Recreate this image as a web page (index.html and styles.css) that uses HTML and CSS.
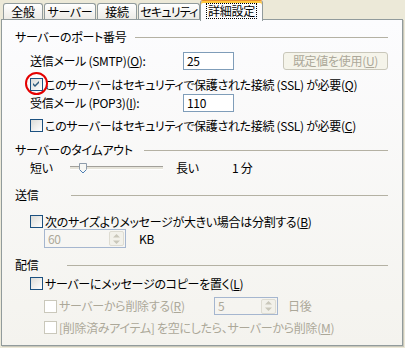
FILE: index.html
```html
<!DOCTYPE html>
<html lang="ja">
<head>
    <meta charset="UTF-8">
    <title>詳細設定</title>
    <link rel="stylesheet" href="styles.css">
</head>
<body>

    <!-- Tab strip -->
    <div class="tabs">
        <div class="tab tab-general">全般</div>
        <div class="tab tab-server">サーバー</div>
        <div class="tab tab-connect">接続</div>
        <div class="tab tab-security">セキュリティ</div>
        <div class="tab tab-active"><span class="focus">詳細設定</span></div>
    </div>

    <!-- Tab page -->
    <div class="panel">

        <div class="group-title row-ports">
            <span>サーバーのポート番号</span>
            <i class="rule rule-ports"></i>
        </div>

        <div class="field-row row-smtp">
            <span class="field-label">送信メール (SMTP)(<u>O</u>):</span>
            <div class="text-box">25</div>
            <div class="btn disabled">既定値を使用(<u>U</u>)</div>
        </div>

        <div class="check-row row-ssl1">
            <span class="check">
                <svg width="11" height="11" viewBox="0 0 11 11"><path d="M2 4 L4 6 L8 2 L8 4 L4 8 L2 6 Z" fill="#2c5a7c"/></svg>
            </span>
            <span class="check-text">このサーバーはセキュリティで保護された接続 (SSL) が必要(<u>Q</u>)</span>
            <span class="mark"></span>
        </div>

        <div class="field-row row-pop3">
            <span class="field-label">受信メール (POP3)(<u>I</u>):</span>
            <div class="text-box">110</div>
        </div>

        <div class="check-row row-ssl2">
            <span class="check"></span>
            <span class="check-text">このサーバーはセキュリティで保護された接続 (SSL) が必要(<u>C</u>)</span>
        </div>

        <div class="group-title row-timeout">
            <span>サーバーのタイムアウト</span>
            <i class="rule rule-timeout"></i>
        </div>

        <div class="slider-row">
            <span class="slider-short">短い</span>
            <div class="slider">
                <div class="track"></div>
                <svg class="thumb" width="9" height="11" viewBox="0 0 9 11">
                    <path d="M0.5 0.5 H7.5 V6.5 L4 10 L0.5 6.5 Z" fill="#f7f7f4" stroke="#8d9bab"/>
                    <path d="M1 7 L4 10 L7 7" fill="none" stroke="#4f7fb4"/>
                </svg>
            </div>
            <span class="slider-long">長い</span>
            <span>1 分</span>
        </div>

        <div class="group-title row-send">
            <span>送信</span>
            <i class="rule rule-send"></i>
        </div>

        <div class="check-row row-split">
            <span class="check"></span>
            <span class="check-text">次のサイズよりメッセージが大きい場合は分割する(<u>B</u>)</span>
        </div>

        <div class="spin-row row-size">
            <div class="spin spin-size">
                <span class="spin-value">60</span>
                <span class="spin-btn">
                    <svg width="9" height="12" viewBox="0 0 9 12"><path d="M4.5 1 L8 4.5 H1 Z M1 7.5 H8 L4.5 11 Z" fill="#c9c7ba"/></svg>
                </span>
            </div>
            <span class="unit-kb">KB</span>
        </div>

        <div class="group-title row-deliver">
            <span>配信</span>
            <i class="rule rule-deliver"></i>
        </div>

        <div class="check-row row-copy">
            <span class="check"></span>
            <span class="check-text">サーバーにメッセージのコピーを置く(<u>L</u>)</span>
        </div>

        <div class="check-row sub row-remove">
            <span class="check disabled"></span>
            <span class="check-text muted remove-text">サーバーから削除する(<u>R</u>)</span>
            <div class="spin spin-days">
                <span class="spin-value">5</span>
                <span class="spin-btn">
                    <svg width="9" height="12" viewBox="0 0 9 12"><path d="M4.5 1 L8 4.5 H1 Z M1 7.5 H8 L4.5 11 Z" fill="#c9c7ba"/></svg>
                </span>
            </div>
            <span class="muted unit-days">日後</span>
        </div>

        <div class="check-row sub row-empty">
            <span class="check disabled"></span>
            <span class="check-text muted">[削除済みアイテム] を空にしたら、サーバーから削除(<u>M</u>)</span>
        </div>

    </div>

</body>
</html>
```

FILE: styles.css
```css
/* Global */
body {
    margin: 0;
    width: 405px;
    height: 348px;
    overflow: hidden;
    background: #ece9d8;
    color: #000;
    font-family: "Noto Sans CJK JP", "Noto Sans", sans-serif;
    font-size: 12px;
    font-feature-settings: "palt";
    letter-spacing: -0.3px;
    line-height: 14px;
    white-space: nowrap;
}

u {
    text-decoration: underline;
    text-underline-offset: 1px;
}

/* Tabs */
.tabs {
    display: flex;
    align-items: flex-end;
    height: 19px;
    padding-left: 3px;
    position: relative;
    z-index: 1;
}

.tab {
    height: 16px;
    box-sizing: border-box;
    border: 1px solid #919b9c;
    border-bottom: none;
    border-radius: 3px 3px 0 0;
    background: linear-gradient(#ffffff, #ecebe6);
    display: flex;
    align-items: center;
    justify-content: center;
    margin-right: 1px;
    padding-top: 1px;
}

.tab-general { width: 40px; }
.tab-server { width: 52px; }
.tab-connect { width: 40px; }

.tab-security {
    width: 62px;
    margin-right: 0;
    letter-spacing: -0.8px;
}

.tab-active {
    width: 63px;
    height: 21px;
    margin-bottom: -2px;
    border-top: 1px solid #e68b2c;
    box-shadow: inset 0 2px 0 #ffc83c;
    background: #fcfcfe;
    padding-top: 0;
}

.tab-active .focus {
    outline: 1px dotted #000;
    padding: 0 1px;
}

/* Tab page */
.panel {
    margin-left: 1px;
    width: 402px;
    height: 327px;
    box-sizing: border-box;
    border: 1px solid #919b9c;
    background: linear-gradient(#fcfcfe, #f4f3ee);
    box-shadow: 1px 1px 0 #c9c7ba;
    padding: 10px 14px 0 13px;
}

/* Group titles */
.group-title {
    display: flex;
    align-items: center;
    justify-content: space-between;
    height: 14px;
}

.rule {
    height: 1px;
    background: #b4b1a3;
}

.rule-ports { width: 253px; }
.rule-timeout { width: 244px; }
.rule-send { width: 317px; }
.rule-deliver { width: 321px; }

.row-timeout { margin-top: 10px; }
.row-send { margin-top: 13px; }
.row-deliver { margin-top: 10px; }

/* Label + text box rows */
.field-row {
    display: flex;
    align-items: center;
    height: 18px;
    padding-left: 15px;
}

.row-smtp { margin-top: 8px; }
.row-pop3 { margin-top: 2px; }

.field-label {
    width: 153px;
}

.text-box {
    width: 51px;
    height: 18px;
    box-sizing: border-box;
    border: 1px solid #7f9db9;
    background: #fff;
    padding: 1px 3px;
}

.btn {
    width: 105px;
    height: 18px;
    box-sizing: border-box;
    margin-left: 49px;
    border: 1px solid #c9c7ba;
    border-radius: 3px;
    background: #f5f4ea;
    display: flex;
    align-items: center;
    justify-content: center;
}

.btn.disabled,
.muted {
    color: #aca899;
}

/* Check boxes */
.check-row {
    display: flex;
    align-items: center;
    height: 15px;
    padding-left: 15px;
    position: relative;
}

.check-row.sub {
    padding-left: 29px;
}

.row-ssl1 { margin-top: 7px; }
.row-ssl2 { margin-top: 6px; }
.row-split { margin-top: 12px; }
.row-copy { margin-top: 4px; }
.row-remove { margin-top: 6px; height: 18px; }
.row-empty { margin-top: 5px; }

.check {
    width: 13px;
    height: 13px;
    flex: none;
    box-sizing: border-box;
    border: 1px solid #1c5180;
    background: linear-gradient(135deg, #dcdcd7, #ffffff);
    display: flex;
    align-items: center;
    justify-content: center;
}

.check.disabled {
    border-color: #cac8bb;
    background: #fff;
}

.check-text {
    margin-left: 2px;
}

/* red marker drawn over the first check box */
.mark {
    position: absolute;
    left: 10px;
    top: -5px;
    width: 19px;
    height: 19px;
    border: 2px solid #e40000;
    border-radius: 50%;
}

/* Timeout slider */
.slider-row {
    display: flex;
    align-items: center;
    height: 14px;
    margin-top: 4px;
    padding-left: 15px;
}

.slider-short {
    width: 40px;
}

.slider {
    width: 93px;
    height: 11px;
    position: relative;
    margin-right: 13px;
}

.track {
    margin-top: 3px;
    height: 2px;
    border-top: 1px solid #a2a09a;
    border-bottom: 1px solid #fff;
    background: #e6e4da;
}

.thumb {
    position: absolute;
    left: 9px;
    top: 0;
}

.slider-long {
    width: 56px;
}

/* Spin boxes */
.spin-row {
    display: flex;
    align-items: center;
    padding-left: 29px;
}

.spin {
    height: 19px;
    box-sizing: border-box;
    border: 1px solid #a5b6cf;
    display: flex;
    align-items: center;
    justify-content: space-between;
    padding: 0 1px 0 3px;
    color: #aca899;
}

.spin-size { width: 82px; }

.spin-days {
    width: 64px;
    height: 18px;
}

.spin-btn {
    width: 15px;
    height: 15px;
    box-sizing: border-box;
    border: 1px solid #dedcd2;
    border-radius: 2px;
    background: #f2f1ea;
    display: flex;
    align-items: center;
    justify-content: center;
}

.unit-kb {
    margin-left: 13px;
}

.remove-text {
    width: 155px;
}

.unit-days {
    margin-left: 10px;
}
```
